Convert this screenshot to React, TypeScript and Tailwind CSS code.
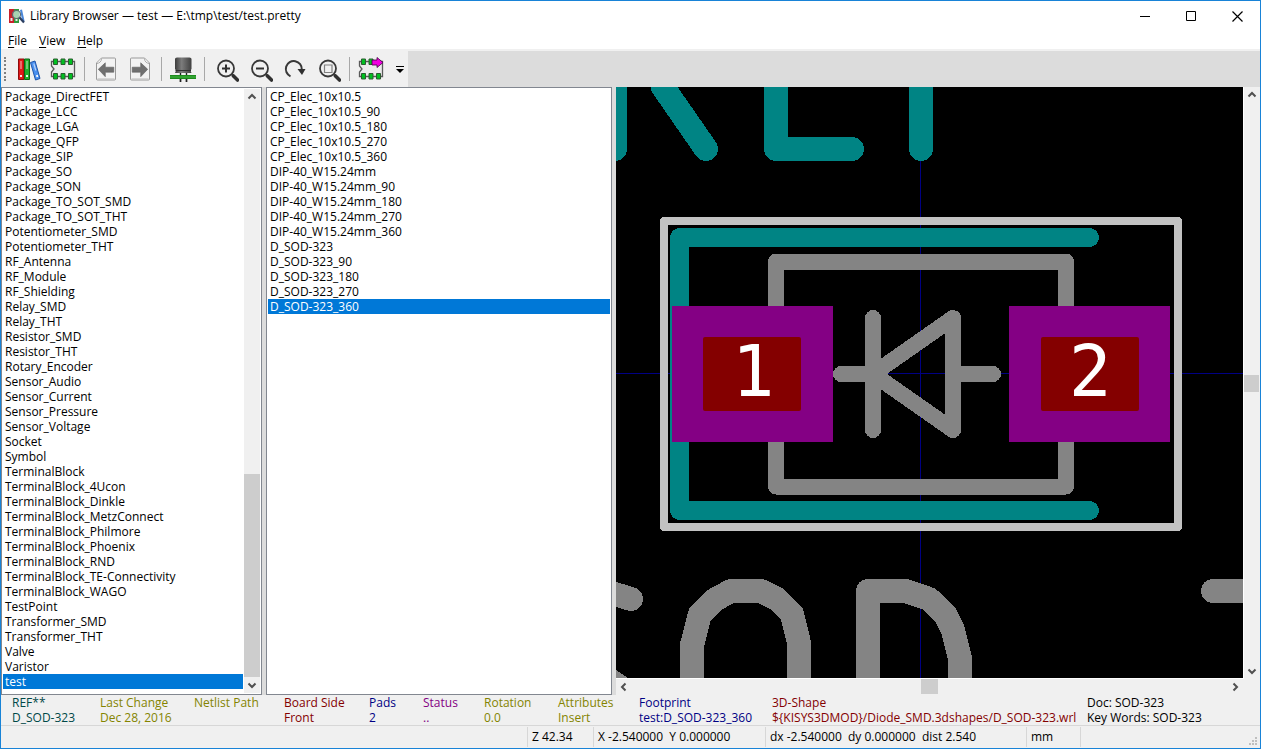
import { useState, type ReactNode } from "react"

const libraries = [
  "Package_DirectFET",
  "Package_LCC",
  "Package_LGA",
  "Package_QFP",
  "Package_SIP",
  "Package_SO",
  "Package_SON",
  "Package_TO_SOT_SMD",
  "Package_TO_SOT_THT",
  "Potentiometer_SMD",
  "Potentiometer_THT",
  "RF_Antenna",
  "RF_Module",
  "RF_Shielding",
  "Relay_SMD",
  "Relay_THT",
  "Resistor_SMD",
  "Resistor_THT",
  "Rotary_Encoder",
  "Sensor_Audio",
  "Sensor_Current",
  "Sensor_Pressure",
  "Sensor_Voltage",
  "Socket",
  "Symbol",
  "TerminalBlock",
  "TerminalBlock_4Ucon",
  "TerminalBlock_Dinkle",
  "TerminalBlock_MetzConnect",
  "TerminalBlock_Philmore",
  "TerminalBlock_Phoenix",
  "TerminalBlock_RND",
  "TerminalBlock_TE-Connectivity",
  "TerminalBlock_WAGO",
  "TestPoint",
  "Transformer_SMD",
  "Transformer_THT",
  "Valve",
  "Varistor",
  "test",
]

const footprints = [
  "CP_Elec_10x10.5",
  "CP_Elec_10x10.5_90",
  "CP_Elec_10x10.5_180",
  "CP_Elec_10x10.5_270",
  "CP_Elec_10x10.5_360",
  "DIP-40_W15.24mm",
  "DIP-40_W15.24mm_90",
  "DIP-40_W15.24mm_180",
  "DIP-40_W15.24mm_270",
  "DIP-40_W15.24mm_360",
  "D_SOD-323",
  "D_SOD-323_90",
  "D_SOD-323_180",
  "D_SOD-323_270",
  "D_SOD-323_360",
]

const messages = [
  { label: "REF**", value: "D_SOD-323", color: "text-[#004848]" },
  { label: "Last Change", value: "Dec 28, 2016", color: "text-[#848400]" },
  { label: "Netlist Path", value: "", color: "text-[#848400]" },
  { label: "Board Side", value: "Front", color: "text-[#840000]" },
  { label: "Pads", value: "2", color: "text-[#000084]" },
  { label: "Status", value: "..", color: "text-[#840084]" },
  { label: "Rotation", value: "0.0", color: "text-[#848400]" },
  { label: "Attributes", value: "Insert", color: "text-[#848400]" },
  { label: "Footprint", value: "test:D_SOD-323_360", color: "text-[#000084]" },
  {
    label: "3D-Shape",
    value: "${KISYS3DMOD}/Diode_SMD.3dshapes/D_SOD-323.wrl",
    color: "text-[#840000]",
  },
  { label: "Doc: SOD-323", value: "Key Words: SOD-323", color: "text-black" },
]

function AppIcon() {
  return (
    <svg width="16" height="16" viewBox="0 0 16 16" aria-hidden="true">
      <path d="M0 1h5v14H0z" fill="#c8202a" />
      <path d="M5 1h5v14H5z" fill="#2e9a3c" />
      <path d="M1.5 10h2v3h-2zM6.500 11h2v2h-2z" fill="#e8e8e8" />
      <path d="M11 2l2-.5L15.500 13l-2 1z" fill="#4a86d8" />
      <circle cx="7.500" cy="6.500" r="4" fill="#cfe6d8" fillOpacity="0.75" stroke="#5c6a70" strokeWidth="1.200" />
      <path d="M10.500 9.500L15 14.500" stroke="#2c3e60" strokeWidth="2.200" />
    </svg>
  )
}

function Icon({ children }: { children: ReactNode }) {
  return (
    <svg width="26" height="26" viewBox="0 0 26 26" fill="none" aria-hidden="true">
      {children}
    </svg>
  )
}

function BooksIcon() {
  return (
    <Icon>
      <path d="M2.500 3h5.500v20.500H2.500z" fill="#e01818" stroke="#8c0c0c" />
      <path d="M8.500 3h5v20.500h-5z" fill="#1fae2c" stroke="#0c6414" />
      <path d="M14.500 6.500l4.500-1.500 5 17.500-4.500 1.500z" fill="#4a90f0" stroke="#2054a8" />
      <path d="M5 5v8M11 5v8M17.800 7.500l2 7" stroke="#fff" strokeOpacity="0.6" strokeWidth="1.200" />
      <path d="M5 19v2M11 19v2M20.900 19l.5 2" stroke="#fff" strokeWidth="1.800" />
    </Icon>
  )
}

function PinBlock({ skipTop = false }: { skipTop?: boolean }) {
  return (
    <>
      <path d="M1.500 5.500h23v15h-23V16l2.500-3-2.500-3z" fill="#ececec" stroke="#5a5a5a" strokeWidth="1.300" />
      <g fill="#00c020" stroke="#2c5c30" strokeWidth="1">
        <path d="M3.500 3h4v5.500h-4zM11 3h4v5.500h-4z" />
        {!skipTop && <path d="M18.500 3h4v5.500h-4z" />}
        <path d="M3.500 17.500h4V23h-4zM11 17.500h4V23h-4zM18.500 17.500h4V23h-4z" />
      </g>
    </>
  )
}

function PageArrow({ forward = false }: { forward?: boolean }) {
  return (
    <Icon>
      <g transform={forward ? "translate(26 0) scale(-1 1)" : undefined}>
        <path d="M8.500 2h13q1 0 1 1v20q0 1-1 1H4.500q-1 0-1-1V7z" fill="#f3f3f3" stroke="#9a9a9a" />
        <path d="M4 7.500C6 7 8.500 6 8.500 2.500" fill="#fff" stroke="#a8a8a8" />
        <path d="M4.500 22.500h17" stroke="#d6d6d6" />
        <path d="M5.300 13.300l7-6.500v4.400h8.500v5h-8.500v4.500z" fill="#707070" stroke="#606060" strokeWidth="0.600" />
      </g>
    </Icon>
  )
}

function ComponentIcon() {
  return (
    <Icon>
      <defs>
        <linearGradient id="can" x1="0" x2="1" y1="0" y2="0">
          <stop offset="0" stopColor="#3c3c3c" />
          <stop offset="0.400" stopColor="#7c7c7c" />
          <stop offset="1" stopColor="#404040" />
        </linearGradient>
      </defs>
      <path d="M10.500 17v9M16.500 17v9" stroke="#202020" strokeWidth="1.400" />
      <path d="M5 3Q5 1.500 7 1.500h12.500q2 0 2 1.500V13L20.500 14.500 21.500 17H5l1-2.500L5 13z" fill="url(#can)" />
      <path d="M5.500 14.500h15.500" stroke="#303030" />
      <path d="M0 19h26v4H0z" fill="#1c8c1c" />
      <path d="M0 21h26" stroke="#46b846" />
      <path d="M10.500 23v3M16.500 23v3" stroke="#202020" strokeWidth="1.400" />
    </Icon>
  )
}

function ZoomIcon({ children }: { children: ReactNode }) {
  return (
    <Icon>
      <circle cx="13" cy="12.500" r="8" stroke="#383838" strokeWidth="1.800" />
      <path d="M19 18.500l2 2" stroke="#383838" strokeWidth="2" />
      <path d="M20.500 20l4 4" stroke="#303030" strokeWidth="3.600" strokeLinecap="round" />
      {children}
    </Icon>
  )
}

function RedrawIcon() {
  return (
    <Icon>
      <path d="M9.500 20.300A8 8 0 1 1 20.800 13.500" stroke="#383838" strokeWidth="2" />
      <path d="M16.500 13h8l-3.500 6z" fill="#303030" />
    </Icon>
  )
}

function ExportIcon() {
  return (
    <Icon>
      <PinBlock skipTop />
      <path d="M14 4h5V1.500l6 5-6 5V9h-5z" fill="#f000e0" stroke="#400040" strokeWidth="0.800" />
    </Icon>
  )
}

function ToolButton({ label, children }: { label: string; children: ReactNode }) {
  return (
    <button type="button" aria-label={label} className="flex h-9 w-[34px] items-center justify-center hover:bg-[#d8e8f6]">
      {children}
    </button>
  )
}

function Separator() {
  return <span className="mx-1 h-6 w-px bg-[#a8a8a8]" />
}

const chevrons = {
  up: "M2.500 7.500L6 4l3.500 3.500",
  down: "M2.500 4.500L6 8l3.500-3.500",
  left: "M7.500 2.500L4 6l3.500 3.500",
  right: "M4.500 2.500L8 6l-3.500 3.500",
}

function ScrollArrow({ direction }: { direction: keyof typeof chevrons }) {
  return (
    <button
      type="button"
      aria-label={`Scroll ${direction}`}
      className="flex size-4 shrink-0 items-center justify-center"
    >
      <svg width="12" height="12" viewBox="0 0 12 12" fill="none" aria-hidden="true">
        <path d={chevrons[direction]} stroke="#505050" strokeWidth="2" />
      </svg>
    </button>
  )
}

interface ListPanelProps {
  label: string
  items: string[]
  initial: string
  scrollbar?: boolean
}

function ListPanel({ label, items, initial, scrollbar = false }: ListPanelProps) {
  const [selected, setSelected] = useState(initial)

  return (
    <div className="flex h-full border border-[#828790] bg-white p-px">
      <ul aria-label={label} className="min-w-0 flex-1 overflow-hidden">
        {items.map((item) => (
          <li key={item}>
            <button
              type="button"
              aria-pressed={item === selected}
              onClick={() => setSelected(item)}
              className={`block h-[15px] w-full px-0.5 text-left leading-[15px] whitespace-nowrap ${
                item === selected ? "bg-[#0078d7] text-white" : ""
              }`}
            >
              {item}
            </button>
          </li>
        ))}
      </ul>
      {scrollbar && (
        <div className="ml-px flex w-4 flex-col bg-[#f0f0f0]">
          <ScrollArrow direction="up" />
          <div className="flex flex-1 flex-col justify-end">
            <div className="h-[203px] bg-[#cdcdcd]" />
          </div>
          <ScrollArrow direction="down" />
        </div>
      )}
    </div>
  )
}

function Pad({ x, holeX, name }: { x: number; holeX: number; name: string }) {
  return (
    <g>
      <rect x={x} y="219" width="161" height="136" fill="#840084" />
      <rect x={holeX} y="250" width="98" height="74" rx="2" fill="#840000" />
      <text
        x={x + 81}
        y="309"
        textAnchor="middle"
        fill="#fff"
        fontSize="71"
        fontFamily="'DejaVu Sans Mono', monospace"
      >
        {name}
      </text>
    </g>
  )
}

function FootprintCanvas() {
  return (
    <svg
      viewBox="0 0 627 591"
      preserveAspectRatio="xMidYMid slice"
      className="block min-h-0 w-full flex-1 bg-black"
      role="img"
      aria-label="Footprint preview"
    >
      <g shapeRendering="crispEdges" fill="none" strokeLinecap="round" strokeLinejoin="round">
        {/* origin axes */}
        <path d="M304.500 0V591M0 286.500H627" stroke="#000084" />

        {/* silkscreen */}
        <g stroke="#008484">
          <path strokeWidth="24" d="M-1 -20V62M47 0L90 62M160 -20V62H236M305 -20V62" />
          <path strokeWidth="19" d="M473.500 150.500H63.500V423.500H473.500" />
        </g>

        {/* fabrication layer */}
        <g stroke="#848484">
          <path strokeWidth="16" d="M160 174.500H450V399.500H160z" />
          <path strokeWidth="16" d="M225 287H257M257 231V343M257 287L337 231V343zM337 287H377" />
          <path
            strokeWidth="24"
            d="M-3 506.500L15 512M-12 589.500L12 605.500M76 610V558L84 527L100 512L115 504H145L161 512L176 527L183 556V610M252 610V504H290L313 512L329 527L337 543L344 571V610M597 504H650"
          />
        </g>

        {/* courtyard */}
        <rect x="48" y="134" width="514" height="306" stroke="#c2c2c2" strokeWidth="8" />
      </g>
      <Pad x={56} holeX={87} name="1" />
      <Pad x={393} holeX={425} name="2" />
    </svg>
  )
}

export default function App() {
  return (
    <div className="flex h-screen cursor-default flex-col overflow-hidden border border-[#1883d7] bg-[#f0f0f0] font-['Open_Sans',sans-serif] text-[12px] text-black">
      <header className="flex h-[30px] shrink-0 items-center bg-white pl-2">
        <AppIcon />
        <h1 className="ml-[5px] flex-1">Library Browser — test — E:\tmp\test/test.pretty</h1>
        <button type="button" aria-label="Minimize" className="flex h-full w-[46px] items-center justify-center">
          <svg width="11" height="11" viewBox="0 0 11 11" aria-hidden="true">
            <path d="M0 5.500h10" stroke="#000" />
          </svg>
        </button>
        <button type="button" aria-label="Maximize" className="flex h-full w-[46px] items-center justify-center">
          <svg width="11" height="11" viewBox="0 0 11 11" fill="none" aria-hidden="true">
            <path d="M.5.5h9v9h-9z" stroke="#000" />
          </svg>
        </button>
        <button type="button" aria-label="Close" className="flex h-full w-[46px] items-center justify-center">
          <svg width="11" height="11" viewBox="0 0 11 11" aria-hidden="true">
            <path d="M.5.5l10 10M10.500.5l-10 10" stroke="#000" strokeWidth="1.200" />
          </svg>
        </button>
      </header>

      <nav className="flex h-[18px] shrink-0 items-end gap-3 bg-white pl-[7px]">
        {["File", "View", "Help"].map((name) => (
          <button key={name} type="button" className="leading-4">
            <span className="underline underline-offset-2">{name[0]}</span>
            {name.slice(1)}
          </button>
        ))}
      </nav>

      <div className="flex shrink-0 border-t-2 border-[#f0f0f0] bg-[#dcdcdc]">
        <div className="flex h-9 w-[407px] items-center bg-[#f0f0f0] pl-[3px]">
          <span className="mr-1.5 h-6 border-l-2 border-dotted border-[#808080]" />
          <ToolButton label="Select library">
            <BooksIcon />
          </ToolButton>
          <ToolButton label="Select footprint">
            <Icon>
              <PinBlock />
            </Icon>
          </ToolButton>
          <Separator />
          <ToolButton label="Previous footprint">
            <PageArrow />
          </ToolButton>
          <ToolButton label="Next footprint">
            <PageArrow forward />
          </ToolButton>
          <Separator />
          <ToolButton label="3D viewer">
            <ComponentIcon />
          </ToolButton>
          <Separator />
          <ToolButton label="Zoom in">
            <ZoomIcon>
              <path d="M9 12.500h8M13 8.500v8" stroke="#303030" strokeWidth="2" />
            </ZoomIcon>
          </ToolButton>
          <ToolButton label="Zoom out">
            <ZoomIcon>
              <path d="M9 12.500h8" stroke="#303030" strokeWidth="2" />
            </ZoomIcon>
          </ToolButton>
          <ToolButton label="Redraw">
            <RedrawIcon />
          </ToolButton>
          <ToolButton label="Zoom to fit">
            <ZoomIcon>
              <path d="M9.500 9h7.500v7.500H9.500z" stroke="#808080" strokeWidth="1.200" />
            </ZoomIcon>
          </ToolButton>
          <Separator />
          <ToolButton label="Insert footprint in board">
            <ExportIcon />
          </ToolButton>
          <button type="button" aria-label="More tools" className="ml-2 flex h-9 items-center">
            <svg width="8" height="8" viewBox="0 0 8 8" aria-hidden="true">
              <path d="M0 1.500h8" stroke="#000" />
              <path d="M0 4h8L4 8z" />
            </svg>
          </button>
        </div>
      </div>

      <main className="flex min-h-0 flex-1 bg-[#dcdcdc]">
        <section className="w-[261px] shrink-0">
          <ListPanel label="Libraries" items={libraries} initial="test" scrollbar />
        </section>
        <section className="ml-1 w-[346px] shrink-0">
          <ListPanel label="Footprints" items={footprints} initial="D_SOD-323_360" />
        </section>
        <section className="ml-1 flex min-w-0 flex-1 bg-[#f0f0f0]">
          <div className="flex min-w-0 flex-1 flex-col">
            <FootprintCanvas />
            <div className="flex border-t border-white">
              <ScrollArrow direction="left" />
              <div className="flex flex-1 justify-center">
                <div className="h-[15px] w-[17px] bg-[#cdcdcd]" />
              </div>
              <ScrollArrow direction="right" />
            </div>
          </div>
          <div className="mb-4 flex w-[17px] flex-col border-l border-white">
            <ScrollArrow direction="up" />
            <div className="flex flex-1 flex-col justify-center">
              <div className="h-[17px] w-[15px] bg-[#cdcdcd]" />
            </div>
            <ScrollArrow direction="down" />
          </div>
        </section>
      </main>

      <dl className="grid h-[31px] shrink-0 grid-cols-[88px_94px_90px_85px_54px_61px_74px_81px_133px_315px_1fr] border-b border-[#d7d7d7] pl-[11px] leading-[15px] whitespace-nowrap">
        {messages.map((message) => (
          <div key={message.label} className={message.color}>
            <dt>{message.label}</dt>
            <dd>{message.value}</dd>
          </div>
        ))}
      </dl>

      <footer className="flex h-[22px] shrink-0 items-center justify-end py-px whitespace-pre">
        <span className="flex h-full w-[66px] items-center border-l border-[#d7d7d7] pl-1">Z 42.34</span>
        <span className="flex h-full w-[172px] items-center border-l border-[#d7d7d7] pl-1">
          {"X -2.540000  Y 0.000000"}
        </span>
        <span className="flex h-full w-[261px] items-center border-l border-[#d7d7d7] pl-1">
          {"dx -2.540000  dy 0.000000  dist 2.540"}
        </span>
        <span className="flex h-full w-[54px] items-center border-l border-[#d7d7d7] pl-1">mm</span>
        <span className="flex h-full w-[180px] items-end justify-end border-l border-[#d7d7d7] pr-0.5">
          <svg width="10" height="10" viewBox="0 0 10 10" fill="#bfbfbf" aria-hidden="true">
            <path d="M7 0h2v2H7zM4 3h2v2H4zM7 3h2v2H7zM1 6h2v2H1zM4 6h2v2H4zM7 6h2v2H7z" />
          </svg>
        </span>
      </footer>
    </div>
  )
}
